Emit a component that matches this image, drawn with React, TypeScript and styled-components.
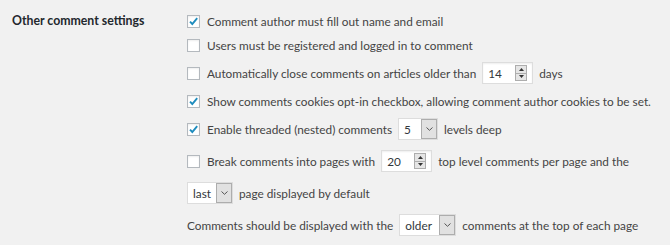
import React from "react";
import styled, { createGlobalStyle } from "styled-components";

const Global = createGlobalStyle`
  html, body { margin: 0; padding: 0; background: #f1f1f1; }
  body { font-family: "Lato", "Noto Sans", sans-serif; color: #444; }
`;

const Page = styled.div`
  display: flex;
  padding: 14px 0 0 12px;
  width: 670px;
  height: 245px;
  box-sizing: border-box;
  background: #f1f1f1;
`;

const Label = styled.div`
  width: 175px;
  flex: none;
  font-size: 12.3px;
  font-weight: 700;
  color: #23282d;
  line-height: 14px;
`;

const Fields = styled.div`
  display: flex;
  flex-direction: column;
  gap: 10px;
`;

const Row = styled.div<{ $tall?: boolean }>`
  display: flex;
  align-items: center;
  height: ${(p) => (p.$tall ? 22 : 14)}px;
  font-size: 11.8px;
  white-space: nowrap;
  gap: 6px;
`;

const Text = styled.span``;

const Box = styled.span`
  width: 13px;
  height: 13px;
  flex: none;
  box-sizing: border-box;
  border: 1px solid #b4b9be;
  background: #fff;
  box-shadow: inset 0 1px 2px rgba(0, 0, 0, 0.07);
  display: flex;
  align-items: center;
  justify-content: center;
  margin-right: 1px;
`;

const Check = () => (
  <svg width="11" height="11" viewBox="0 0 11 11">
    <path d="M2 5.6 L4.3 8 L9.2 2.2" fill="none" stroke="#1e8cbe" strokeWidth="1.9" />
  </svg>
);

const Checkbox = ({ on }: { on?: boolean }) => <Box>{on && <Check />}</Box>;

const NumBox = styled.span`
  display: flex;
  align-items: center;
  justify-content: space-between;
  width: 51px;
  height: 22px;
  box-sizing: border-box;
  border: 1px solid #ddd;
  background: #fff;
  box-shadow: inset 0 1px 2px rgba(0, 0, 0, 0.07);
  padding: 0 5px 0 5px;
  color: #32373c;
`;

const Spin = styled.span`
  display: flex;
  flex-direction: column;
  width: 12px;
  height: 16px;
  box-sizing: border-box;
  border: 1px solid #adadad;
  background: #e5e5e5;
`;

const SpinHalf = styled.span<{ $down?: boolean }>`
  flex: 1;
  display: flex;
  align-items: center;
  justify-content: center;
  border-top: ${(p) => (p.$down ? "1px solid #adadad" : "none")};
`;

const Tri = ({ down }: { down?: boolean }) => (
  <svg width="5" height="3" viewBox="0 0 5 3">
    <path d={down ? "M0 0 H5 L2.5 3 Z" : "M0 3 H5 L2.5 0 Z"} fill="#333" />
  </svg>
);

const NumberInput = ({ value }: { value: string }) => (
  <NumBox>
    <span>{value}</span>
    <Spin>
      <SpinHalf><Tri /></SpinHalf>
      <SpinHalf $down><Tri down /></SpinHalf>
    </Spin>
  </NumBox>
);

const SelBox = styled.span<{ $w: number }>`
  display: flex;
  align-items: stretch;
  width: ${(p) => p.$w}px;
  height: 22px;
  box-sizing: border-box;
  border: 1px solid #ddd;
  background: #fff;
  color: #32373c;
`;

const SelVal = styled.span`
  flex: 1;
  display: flex;
  align-items: center;
  padding-left: 5px;
`;

const SelBtn = styled.span`
  width: 16px;
  flex: none;
  box-sizing: border-box;
  display: flex;
  align-items: center;
  justify-content: center;
  background: #e1e1e1;
  border: 1px solid #adadad;
`;

const Chevron = () => (
  <svg width="7" height="4" viewBox="0 0 7 4">
    <path d="M0.5 0.5 L3.5 3.3 L6.5 0.5" fill="none" stroke="#555" strokeWidth="1" />
  </svg>
);

const Select = ({ value, w }: { value: string; w: number }) => (
  <SelBox $w={w}>
    <SelVal>{value}</SelVal>
    <SelBtn><Chevron /></SelBtn>
  </SelBox>
);

export default function App() {
  return (
    <>
      <Global />
      <Page>
        <Label>Other comment settings</Label>
        <Fields>
          <Row>
            <Checkbox on />
            <Text>Comment author must fill out name and email</Text>
          </Row>
          <Row>
            <Checkbox />
            <Text>Users must be registered and logged in to comment</Text>
          </Row>
          <Row $tall>
            <Checkbox />
            <Text>Automatically close comments on articles older than</Text>
            <NumberInput value="14" />
            <Text>days</Text>
          </Row>
          <Row>
            <Checkbox on />
            <Text>Show comments cookies opt-in checkbox, allowing comment author cookies to be set.</Text>
          </Row>
          <Row $tall>
            <Checkbox on />
            <Text>Enable threaded (nested) comments</Text>
            <Select value="5" w={40} />
            <Text>levels deep</Text>
          </Row>
          <Row $tall>
            <Checkbox />
            <Text>Break comments into pages with</Text>
            <NumberInput value="20" />
            <Text>top level comments per page and the</Text>
          </Row>
          <Row $tall>
            <Select value="last" w={46} />
            <Text>page displayed by default</Text>
          </Row>
          <Row $tall>
            <Text>Comments should be displayed with the</Text>
            <Select value="older" w={57} />
            <Text>comments at the top of each page</Text>
          </Row>
        </Fields>
      </Page>
    </>
  );
}
